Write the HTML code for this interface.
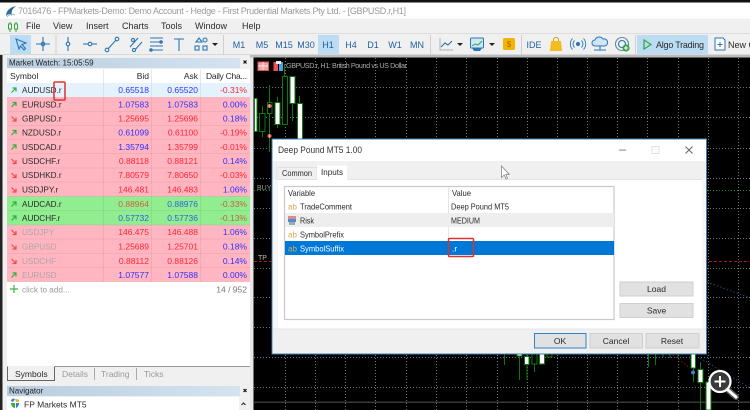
<!DOCTYPE html>
<html><head><meta charset="utf-8"><title>MT5</title>
<style>
html,body{margin:0;padding:0;width:750px;height:410px;overflow:hidden;background:#f0f0f0}
svg{display:block;filter:blur(.3px)}
text{font-family:"Liberation Sans",sans-serif;font-size:8.5px;fill:#2a2a2a}
text[x="22"]{font-size:8.2px}
.b{fill:#3030ff}.r{fill:#ff2436}.e{text-anchor:end}.g{fill:#b3a3a8}.m{text-anchor:middle}
.tf{fill:#1f5f9f;font-size:9px;text-anchor:middle}
.ic{fill:none;stroke:#2a75b5;stroke-width:1.1}
.grid{stroke:#6f7883;stroke-width:1;stroke-dasharray:1 2;fill:none;shape-rendering:crispEdges}
.w{fill:#fff;stroke:#0a7a0a;stroke-width:1}.k{fill:#000;stroke:#0a7a0a;stroke-width:1}
.wk{stroke:#0a7a0a;stroke-width:1}
.btn{fill:#e1e1e1;stroke:#cfcfcf;stroke-width:1}
.up{fill:none;stroke:#2fae3f;stroke-width:1.2}.dn{fill:none;stroke:#ef4a4a;stroke-width:1.2}
</style></head><body>
<svg width="750" height="410" viewBox="0 0 750 410" xmlns="http://www.w3.org/2000/svg">
<rect width="750" height="410" fill="#f0f0f0"/>
<rect width="750" height="2.500" fill="#111"/>
<rect y="2.500" width="750" height="16" fill="#fff"/>
<path d="M6 16C6 10 11 7 16 6C12 9 11 12 12 16C10 13 8 14 6 16Z" fill="#2a6f9a"/>
<path d="M7 17C9 14 12 14 15 15" stroke="#9ab8c8" fill="none"/>
<text x="18" y="14" style="font-size:9px;fill:#9a9a9a" textLength="388" lengthAdjust="spacing">7016476 - FPMarkets-Demo: Demo Account - Hedge - First Prudential Markets Pty Ltd. - [GBPUSD.r,H1]</text>

<rect y="18.500" width="750" height="14" fill="#f0f0f0"/>
<path d="M10 22v10M16 22v10" stroke="#2fa83a"/><rect x="8.500" y="24" width="3" height="5" fill="#fff" stroke="#2fa83a"/><rect x="14.500" y="24" width="3" height="5" fill="#fff" stroke="#2fa83a"/>
<text x="26" y="29" style="font-size:9px">File</text>
<text x="53" y="29" style="font-size:9px">View</text>
<text x="86" y="29" style="font-size:9px">Insert</text>
<text x="122" y="29" style="font-size:9px">Charts</text>
<text x="161" y="29" style="font-size:9px">Tools</text>
<text x="195" y="29" style="font-size:9px">Window</text>
<text x="242" y="29" style="font-size:9px">Help</text>

<rect y="33" width="750" height="1" fill="#dcdcdc"/>
<rect x="10" y="35" width="21" height="19" fill="#bcdcf4"/>
<path d="M16 39l10 4-4 1.500 3.500 4-1.500 1.500-3.500-4-1.500 3z" class="ic"/>
<path d="M43 37v14M36 44h14" class="ic"/><circle cx="43" cy="44" r="1.800" class="ic" fill="#fff"/>
<rect x="55.500" y="35" width="1" height="19" fill="#d0d0d0"/>
<path d="M68 37v14" class="ic"/><circle cx="68" cy="44" r="1.800" class="ic" style="fill:#f0f0f0"/>
<path d="M83 44h14" class="ic"/><circle cx="90" cy="44" r="1.800" class="ic" style="fill:#f0f0f0"/>
<path d="M107 50l10-11" class="ic"/><circle cx="107" cy="50" r="1.800" class="ic" style="fill:#f0f0f0"/><circle cx="117" cy="39" r="1.800" class="ic" style="fill:#f0f0f0"/>
<path d="M130 47l8-9M134 51l8-9" class="ic"/><circle cx="133" cy="40" r="1.600" class="ic" style="fill:#f0f0f0"/><circle cx="134" cy="50" r="1.600" class="ic" style="fill:#f0f0f0"/>
<path d="M150 38h13M150 42h13M150 46h13M150 50h13" class="ic"/><circle cx="161" cy="42" r="1.200" class="ic"/><circle cx="151" cy="50" r="1.200" class="ic"/>
<path d="M174 39h10M179 39v12" class="ic"/>
<path d="M199 38l3 4h-6z" class="ic"/><circle cx="205" cy="40" r="2" class="ic"/><rect x="195" y="46" width="4" height="4" class="ic"/><rect x="203" y="46" width="4" height="4" class="ic"/>
<path d="M212 43h6l-3 3z" fill="#222"/>
<rect x="223" y="35" width="1" height="19" fill="#d0d0d0"/>
<rect x="318" y="35" width="21" height="19" fill="#bcdcf4"/>
<text x="239" y="48" class="tf">M1</text><text x="262" y="48" class="tf">M5</text><text x="284" y="48" class="tf">M15</text><text x="306" y="48" class="tf">M30</text><text x="328" y="48" class="tf">H1</text><text x="351" y="48" class="tf">H4</text><text x="373" y="48" class="tf">D1</text><text x="395" y="48" class="tf">W1</text><text x="417" y="48" class="tf">MN</text>
<rect x="430" y="35" width="1" height="19" fill="#d0d0d0"/>
<path d="M440 38v12h13" stroke="#b0b0b0" fill="none"/><path d="M441 47l4-4 3 2 4-4" class="ic"/>
<path d="M457 43h6l-3 3z" fill="#222"/>
<rect x="470.500" y="38" width="13" height="10" rx="1" fill="#cfe6f7" stroke="#2a75b5"/><path d="M472 46l3-2 3 1 4-4" stroke="#3aa34a" fill="none"/><path d="M472 48h10l-2 3h-6z" fill="#2a75b5"/>
<path d="M489 43h6l-3 3z" fill="#222"/>
<rect x="503" y="38" width="12" height="12" rx="1.500" fill="#f4b400"/><text x="509" y="47" class="m" style="font-size:8px;fill:#9a6a00">$</text>
<rect x="521" y="35" width="1" height="19" fill="#d0d0d0"/>
<text x="534" y="48" class="tf">IDE</text>
<path d="M551 41h10l1 10h-12z" fill="#f4bc20"/><path d="M553.500 41v-1a2.500 2.500 0 015 0v1" stroke="#d09a10" fill="none"/>
<circle cx="578" cy="44" r="2" fill="#2a75b5"/><path d="M574.500 40.500a5 5 0 000 7M581.500 40.500a5 5 0 010 7M572.500 38.500a8 8 0 000 11M583.500 38.500a8 8 0 010 11" class="ic" style="stroke-width:.9"/>
<path d="M595 46a3 3 0 010-6 4.500 4.500 0 018-1 3.500 3.500 0 012 7z" fill="#cfe6f7" stroke="#2a75b5"/><path d="M594 50h12M600 46v4" class="ic"/>
<circle cx="622" cy="44" r="6.500" class="ic" style="stroke:#5a8aa0"/><circle cx="622" cy="44" r="3.500" class="ic"/><circle cx="626" cy="48" r="3.600" fill="#3aa34a"/><path d="M624 48h4M626 46v4" stroke="#fff"/>
<rect x="635" y="35" width="1" height="19" fill="#d0d0d0"/>
<rect x="637" y="35" width="71" height="19" fill="#bcdcf4"/>
<path d="M644 40l7 4.500-7 4.500z" fill="none" stroke="#2fa83a" stroke-width="1.200"/>
<text x="656" y="48" style="font-size:9px" textLength="48">Algo Trading</text>
<path d="M715 38h8l2 2v10h-10z" fill="#fff" stroke="#2a75b5"/><path d="M720 42v5M717.500 44.500h5" stroke="#2a75b5"/>
<text x="728" y="48" style="font-size:9px">New Order</text>

<rect y="54" width="750" height="1" fill="#d8d8d8"/>
<rect x="0" y="55" width="2.500" height="355" fill="#222"/>
<rect x="2.500" y="55" width="251" height="355" fill="#f0f0f0"/>

<!-- Market watch -->
<defs><linearGradient id="hd" x1="0" x2="1" y1="0" y2="0"><stop offset="0" stop-color="#b8cddf"/><stop offset="1" stop-color="#d5e3f0"/></linearGradient></defs>
<rect x="7" y="58" width="233" height="10" fill="url(#hd)"/>
<text x="9" y="65.500" style="font-size:8px;fill:#222">Market Watch: 15:05:59</text>
<path d="M243.500 60.500l3 3m0-3l-3 3" stroke="#111" stroke-width="1.200"/>
<rect x="7" y="69" width="243" height="297" fill="#fff"/>
<path d="M103.500 69v14M151.500 69v14M200.500 69v14" stroke="#e8e8e8"/>
<text x="10" y="79">Symbol</text><text x="149" y="79" class="e">Bid</text><text x="198" y="79" class="e">Ask</text><text x="247" y="79" class="e" textLength="41">Daily Cha...</text>

<rect x="7" y="83" width="243" height="14" fill="#e3f2fd"/>
<rect x="7" y="97" width="243" height="99.500" fill="#ffb6c1"/>
<rect x="7" y="196.500" width="243" height="28.500" fill="#90ee90"/>
<rect x="7" y="225" width="243" height="57" fill="#ffb6c1"/>
<path d="M7 111.500h243M7 125.500h243M7 139.500h243M7 153.500h243M7 168h243M7 182h243M7 196.500h243M7 210.500h243M7 225h243M7 239h243M7 253.500h243M7 267.500h243" stroke="#000" stroke-opacity=".05"/>
<path d="M103.500 83v199M151.500 83v199M200.500 83v199" stroke="#000" stroke-opacity=".06"/>

<path class="up" d="M11.500 92.500l4-4M12.500 88h3.500v3.500"/>
<path class="up" d="M11.500 107l4-4M12.500 102.500h3.500v3.500"/>
<path class="dn" d="M11.500 116.500l4 4M12.500 121h3.500v-3.500"/>
<path class="up" d="M11.500 135l4-4M12.500 130.500h3.500v3.500"/>
<path class="up" d="M11.500 149.500l4-4M12.500 145h3.500v3.500"/>
<path class="dn" d="M11.500 159l4 4M12.500 163.500h3.500v-3.500"/>
<path class="dn" d="M11.500 173l4 4M12.500 177.500h3.500v-3.500"/>
<path class="dn" d="M11.500 187.500l4 4M12.500 192h3.500v-3.500"/>
<path class="up" d="M11.500 206.500l4-4M12.500 202h3.500v3.500"/>
<path class="up" d="M11.500 220.500l4-4M12.500 216h3.500v3.500"/>
<path class="dn" d="M11.500 230l4 4M12.500 234.500h3.500v-3.500"/>
<path class="dn" d="M11.500 244.500l4 4M12.500 249h3.500v-3.500"/>
<path class="dn" d="M11.500 259l4 4M12.500 263.500h3.500v-3.500"/>
<path class="up" d="M11.500 277.500l4-4M12.500 273h3.500v3.500"/>

<text x="22" y="93">AUDUSD.r</text><text x="149" y="93" class="e b">0.65518</text><text x="198" y="93" class="e b">0.65520</text><text x="247" y="93" class="e r">-0.31%</text>
<text x="22" y="107.500">EURUSD.r</text><text x="149" y="107.500" class="e b">1.07583</text><text x="198" y="107.500" class="e b">1.07583</text><text x="247" y="107.500" class="e b">0.00%</text>
<text x="22" y="121.500">GBPUSD.r</text><text x="149" y="121.500" class="e r">1.25695</text><text x="198" y="121.500" class="e r">1.25696</text><text x="247" y="121.500" class="e b">0.18%</text>
<text x="22" y="135.500">NZDUSD.r</text><text x="149" y="135.500" class="e b">0.61099</text><text x="198" y="135.500" class="e r">0.61100</text><text x="247" y="135.500" class="e r">-0.19%</text>
<text x="22" y="150">USDCAD.r</text><text x="149" y="150" class="e b">1.35794</text><text x="198" y="150" class="e r">1.35799</text><text x="247" y="150" class="e r">-0.01%</text>
<text x="22" y="164">USDCHF.r</text><text x="149" y="164" class="e r">0.88118</text><text x="198" y="164" class="e r">0.88121</text><text x="247" y="164" class="e b">0.14%</text>
<text x="22" y="178">USDHKD.r</text><text x="149" y="178" class="e r">7.80579</text><text x="198" y="178" class="e r">7.80650</text><text x="247" y="178" class="e r">-0.03%</text>
<text x="22" y="192.500">USDJPY.r</text><text x="149" y="192.500" class="e r">146.481</text><text x="198" y="192.500" class="e r">146.483</text><text x="247" y="192.500" class="e b">1.06%</text>
<text x="22" y="207">AUDCAD.r</text><text x="149" y="207" class="e" style="fill:#d0603f">0.88964</text><text x="198" y="207" class="e" style="fill:#2f5fd8">0.88976</text><text x="247" y="207" class="e" style="fill:#c9603f">-0.33%</text>
<text x="22" y="221">AUDCHF.r</text><text x="149" y="221" class="e" style="fill:#2f5fd8">0.57732</text><text x="198" y="221" class="e" style="fill:#2f5fd8">0.57736</text><text x="247" y="221" class="e" style="fill:#c9603f">-0.13%</text>
<text x="22" y="235" class="g">USDJPY</text><text x="149" y="235" class="e r">146.475</text><text x="198" y="235" class="e r">146.488</text><text x="247" y="235" class="e b">1.06%</text>
<text x="22" y="249.500" class="g">GBPUSD</text><text x="149" y="249.500" class="e r">1.25689</text><text x="198" y="249.500" class="e r">1.25701</text><text x="247" y="249.500" class="e b">0.18%</text>
<text x="22" y="264" class="g">USDCHF</text><text x="149" y="264" class="e r">0.88112</text><text x="198" y="264" class="e r">0.88126</text><text x="247" y="264" class="e b">0.14%</text>
<text x="22" y="278" class="g">EURUSD</text><text x="149" y="278" class="e b">1.07577</text><text x="198" y="278" class="e b">1.07588</text><text x="247" y="278" class="e b">0.00%</text>
<path d="M10 289h8M14 285v8" stroke="#3fb24a" stroke-width="1.200"/>
<text x="22" y="292.500" style="fill:#999">click to add...</text><text x="247" y="292.500" class="e" style="fill:#777">14 / 952</text>
<rect x="54" y="82" width="11" height="18" rx="1" fill="none" stroke="#e0302a" stroke-width="1.500"/>

<!-- tabs -->
<rect x="7" y="366" width="243" height="14" fill="#f0f0f0"/>
<path d="M7.500 366.500V380.500h47V366.500" fill="none" stroke="#666"/><path d="M55 366.500h195" stroke="#999"/>
<text x="15" y="377" style="font-size:8.500px">Symbols</text>
<text x="62" y="377" style="fill:#999">Details</text><text x="101" y="377" style="fill:#999">Trading</text><text x="144" y="377" style="fill:#999">Ticks</text>
<path d="M94.500 368v12M136.500 368v12" stroke="#aaa"/>
<rect x="7" y="386" width="233" height="10" fill="url(#hd)"/>
<text x="9" y="393.500" style="font-size:8px;fill:#222">Navigator</text>
<path d="M243.500 389l3 3m0-3l-3 3" stroke="#111" stroke-width="1.200"/>
<rect x="7" y="397" width="232" height="13" fill="#fff"/>
<path d="M11 401c0-2 3-3 4-2l-2 3z" fill="#2d7fd0"/><path d="M15 399c3 0 5 1 4 3l-3 0z" fill="#e8b820"/><path d="M11 403l4 0 0 5c-2 0-4-2-4-5z" fill="#3fae4a"/><path d="M16 403l3 0c0 2-1 4-3 5z" fill="#2d7fd0"/>
<text x="24" y="407.500">FP Markets MT5</text>
<rect x="239" y="397" width="11" height="13" fill="#f0f0f0"/><path d="M241.500 405l2-2 2 2" stroke="#333" fill="none" stroke-width="1.200"/>

<!-- Chart -->
<rect x="250" y="55" width="500" height="355" fill="#e8e8e8"/>
<rect x="250" y="55" width="500" height="2.500" fill="#bbb"/>
<rect x="253.500" y="57.500" width="496.500" height="352.500" fill="#000"/>
<path class="grid" d="M285.500 58V410M315.500 58V410M345.500 58V410M375.500 58V410M406.500 58V410M436.500 58V410M466.500 58V410M497.500 58V410M527.500 58V410M557.500 58V410M587.500 58V410M617.500 58V410M647.500 58V410M678.500 58V410M708.500 58V410M738.500 58V410"/>
<path class="grid" d="M254 87.500H750M254 117.500H750M254 148.500H750M254 178.500H750M254 208.500H750M254 238.500H750M254 268.500H750M254 297.500H750M254 327.500H750M254 357.500H750M254 387.500H750"/>
<path d="M254 190.500H750" stroke="#1f8a1f" stroke-dasharray="1 2" shape-rendering="crispEdges"/>
<path d="M254 261.500H750" stroke="#b01414" stroke-dasharray="3 2" shape-rendering="crispEdges"/>
<rect x="254" y="401.500" width="496" height="1.500" fill="#383838"/>
<path d="M707 282L750 298M700 358L750 388" stroke="#1c4a70" stroke-dasharray="1.500 2"/>
<path d="M670 353L690 368" stroke="#8a1414" stroke-dasharray="1.500 2"/>

<text x="257" y="190" style="font-size:7px;fill:#999">BUY</text>
<text x="258" y="260" style="font-size:7px;fill:#bbb">TP</text>

<rect x="258" y="62" width="10.500" height="8.500" fill="#f2a0a0" stroke="#e05050"/><path d="M263 62v8M258 66h10" stroke="#fff" stroke-width=".7"/>
<rect x="273.500" y="62" width="4.500" height="9" fill="#f05050"/><rect x="279" y="62" width="4" height="9" fill="#4aa0e0"/><rect x="276" y="61" width="5" height="3" fill="#eee"/>
<text x="286" y="68" style="font-size:7.200px;fill:#aaa" textLength="121" lengthAdjust="spacing">GBPUSD.r, H1:  British Pound vs US Dollar</text>

<path class="wk" d="M262.500 106V137M269.500 85V152M277.500 97V128M284.500 64V125M292.500 76V121M299.500 96V140"/>
<rect x="254.500" y="98.500" width="2.500" height="33" class="w"/>
<rect x="259.500" y="113.500" width="5.500" height="18" class="k"/>
<rect x="267.500" y="102.500" width="4.500" height="11" class="k"/>
<rect x="275" y="102.500" width="5" height="22" class="w"/>
<rect x="282.500" y="76.500" width="5" height="48" class="k"/>
<rect x="290" y="76.500" width="5" height="27" class="w"/>
<rect x="297.500" y="103.500" width="5" height="36" class="w"/>
<circle cx="269.500" cy="106" r="2" fill="#f04a30"/><circle cx="269.500" cy="136" r="2" fill="#f04a30"/>
<path d="M269.500 104v4M267.500 106h4M269.500 134v4M267.500 136h4" stroke="#ddd" stroke-width=".5"/>

<path class="wk" d="M504.500 354V365M519.500 354V380M527 354V380M534.500 354V372M648.500 354V367M655.500 354V365M663 354V357M670 354V358M678 354V358M693.500 354V382M700.500 362V410"/>
<rect x="517" y="353" width="5" height="3" class="w"/>
<rect x="524.500" y="356.500" width="4.500" height="8" class="w"/>
<rect x="532" y="353" width="5" height="11" class="k"/>
<rect x="539.500" y="353" width="5" height="11" class="w"/>
<rect x="547" y="353" width="5" height="4" class="k"/>
<rect x="691" y="353" width="4.500" height="15" class="w"/>
<rect x="698" y="369.500" width="5" height="13" class="w"/>
<rect x="706" y="382" width="5" height="28" class="w"/>
<circle cx="693" cy="372.500" r="2" fill="#3a80d0"/>

<!-- Dialog -->
<rect x="272" y="139" width="434.500" height="215" fill="#fff" stroke="#3d7fb5" stroke-width="1"/>
<text x="278" y="153" style="font-size:9px;fill:#333" textLength="84" lengthAdjust="spacingAndGlyphs">Deep Pound MT5 1.00</text>
<rect x="619" y="149.500" width="7" height="1.200" fill="#999"/>
<rect x="652" y="146.500" width="7" height="7" fill="none" stroke="#e0e0e0"/>
<path d="M685.500 146.500l7 7m0-7l-7 7" stroke="#666"/>
<rect x="273" y="161" width="433" height="18" fill="#f0f0f0"/>
<rect x="273" y="179" width="5" height="150" fill="#f6f6f6"/><rect x="702" y="179" width="4" height="150" fill="#f6f6f6"/>
<rect x="278" y="179" width="424" height="150" fill="#fff"/>
<path d="M278 179.500h424" stroke="#e4e4e4"/>
<rect x="277" y="167.500" width="40" height="12" fill="#f0f0f0" stroke="#e2e2e2"/>
<text x="282" y="176" textLength="30" lengthAdjust="spacingAndGlyphs">Common</text>
<rect x="317" y="165.500" width="30" height="14.500" fill="#fff"/>
<text x="321" y="175" textLength="22" lengthAdjust="spacingAndGlyphs">Inputs</text>
<rect x="284.500" y="186.500" width="329.500" height="133" fill="#fff" stroke="#c8c8c8" stroke-width="1.200"/>
<path d="M448.500 187V255" stroke="#e4e4e4"/>
<text x="288" y="196" textLength="27" lengthAdjust="spacingAndGlyphs">Variable</text><text x="452" y="196" textLength="19" lengthAdjust="spacingAndGlyphs">Value</text>
<text x="288" y="209.500" style="font-size:8px;fill:#d9a850">ab</text><text x="300" y="209.500" textLength="52" lengthAdjust="spacingAndGlyphs">TradeComment</text><text x="451" y="209.500" textLength="58" lengthAdjust="spacingAndGlyphs">Deep Pound MT5</text>
<rect x="285" y="213" width="329" height="14" fill="#eeeeee"/>
<rect x="288" y="216" width="8" height="3" fill="#e08a8a"/><rect x="288" y="219" width="8" height="3" fill="#4a90c8"/><rect x="289" y="222" width="6" height="3" fill="#9ab"/>
<text x="300" y="223.500" textLength="14" lengthAdjust="spacingAndGlyphs">Risk</text><text x="451" y="223.500" textLength="29" lengthAdjust="spacingAndGlyphs">MEDIUM</text>
<text x="288" y="237.500" style="font-size:8px;fill:#d9a850">ab</text><text x="300" y="237.500" textLength="44" lengthAdjust="spacingAndGlyphs">SymbolPrefix</text>
<rect x="285" y="241" width="329" height="14" fill="#0078d7"/>
<text x="288" y="251.500" style="font-size:8px;fill:#c8b060">ab</text><text x="300" y="251.500" style="fill:#fff" textLength="44" lengthAdjust="spacingAndGlyphs">SymbolSuffix</text><text x="452" y="251.500" style="fill:#fff">.r</text>
<rect x="448.500" y="238.500" width="25" height="18" rx="1" fill="none" stroke="#e0302a" stroke-width="1.500"/>
<path d="M501.500 166v11.500l2.700-2.500 1.800 4 1.600-.7-1.800-4h3.500z" fill="#fff" stroke="#888" stroke-width=".8"/>

<rect x="620" y="282" width="73" height="14" class="btn"/><text x="656.500" y="292" class="m">Load</text>
<rect x="620" y="303.500" width="73" height="14" class="btn"/><text x="656.500" y="313.500" class="m">Save</text>
<rect x="273" y="329" width="433" height="24.500" fill="#f0f0f0"/>
<path d="M273 329h433" stroke="#e6e6e6"/>
<rect x="534.500" y="333.500" width="51.500" height="14.500" fill="#e1e1e1" stroke="#2a86d0" stroke-width="1"/><text x="560" y="344" class="m">OK</text>
<rect x="590" y="333.500" width="52.500" height="14.500" class="btn"/><text x="616" y="344" class="m">Cancel</text>
<rect x="646" y="333.500" width="53" height="14.500" class="btn"/><text x="672" y="344" class="m">Reset</text>

<!-- Magnifier -->
<path d="M728 390L736 397" stroke="#555" stroke-width="6" stroke-linecap="round"/>
<path d="M728 390L736 397" stroke="#fff" stroke-width="3" stroke-linecap="round"/>
<circle cx="720" cy="381.500" r="10.500" fill="#444" fill-opacity=".85" stroke="#fff" stroke-width="2.200"/>
<path d="M714.500 381.500h11M720 376v11" stroke="#fff" stroke-width="2"/>
</svg>
</body></html>
